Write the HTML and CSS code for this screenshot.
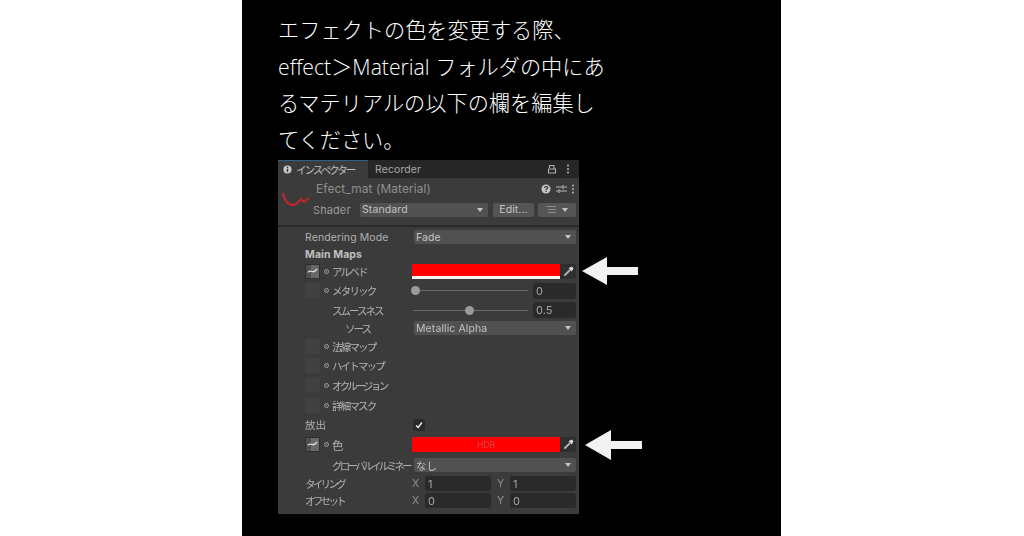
FILE: index.html
```html
<!DOCTYPE html>
<html lang="ja">
<head>
  <meta charset="UTF-8" />
  <title>エフェクトの色</title>
  <link rel="stylesheet" href="styles.css">
</head>
<body>
  <main class="page">
    <p class="intro">エフェクトの色を変更する際、<br>effect＞Material フォルダの中にあ<br>るマテリアルの以下の欄を編集し<br>てください。</p>

    <div class="inspector">
      <div class="tabs">
        <div class="tab active">
          <svg class="tab-icon" viewBox="0 0 10 10"><circle cx="5" cy="5" r="4.5" fill="#c8c8c8"/><rect x="4.2" y="4.2" width="1.6" height="3.6" fill="#333"/><rect x="4.2" y="2" width="1.6" height="1.5" fill="#333"/></svg>
          <span class="jp">インスペクター</span>
        </div>
        <div class="tab">Recorder</div>
        <div class="tab-tools">
          <svg class="lock" viewBox="0 0 10 10"><path d="M2.5 4V1.500h4.500v3M1.500 5h7v4h-7z" fill="none" stroke="#b0b0b0" stroke-width="1.100"/></svg>
          <span class="dots"></span>
        </div>
      </div>

      <div class="mat-head">
        <svg class="mat-preview" viewBox="0 0 30 18"><path d="M2 2c1 7 5 12 10 12 4 0 6-4 8-6l3 3 5-4" fill="none" stroke="#c4262b" stroke-width="2"/></svg>
        <div class="mat-info">
          <div class="mat-title">
            <span class="mat-name">Efect_mat (Material)</span>
            <svg class="help" viewBox="0 0 10 10"><circle cx="5" cy="5" r="4.500" fill="#c4c4c4"/><path d="M3.500 4c0-2 3.200-2 3.200-.2 0 1-1.700 1-1.700 2.200M5 6.800v1.200" fill="none" stroke="#333" stroke-width="1.200"/></svg>
            <svg class="presets" viewBox="0 0 11 10"><path d="M0 3h6M8 3h3M0 7h2M4 7h7M7 1v4M3 5v4" fill="none" stroke="#b8b8b8" stroke-width="1.200"/></svg>
            <span class="dots"></span>
          </div>
          <div class="shader-row">
            <span class="shader-label">Shader</span>
            <div class="dropdown shader">Standard</div>
            <div class="button edit">Edit...</div>
            <div class="button list">
              <svg class="list-icon" viewBox="0 0 10 7"><path d="M0 .5h10M2 3.500h8M2 6.500h8" stroke="#8c8c8c" fill="none"/></svg>
              <span class="caret"></span>
            </div>
          </div>
        </div>
      </div>

      <div class="props">
        <div class="row r17">
          <span class="label">Rendering Mode</span>
          <div class="dropdown wide">Fade</div>
        </div>
        <div class="row r17"><span class="label bold">Main Maps</span></div>

        <div class="row r18">
          <div class="slot filled"><svg viewBox="0 0 13 13"><path d="M1 7.500c2-2 3-2 5-1s3 0 6-3" fill="none" stroke="#ddd" stroke-width="1.500"/></svg></div>
          <span class="target"></span><span class="map-label">アルベド</span>
          <div class="swatch albedo"></div>
          <div class="picker"><svg viewBox="0 0 12 12"><path d="M1.500 10.500l6-6" stroke="#b8b8b8" stroke-width="2.200"/><path d="M6 2.500l3.500-2 2 2-2 3.500z" fill="#dcdcdc"/></svg></div>
          <svg class="arrow arrow-albedo" viewBox="0 0 56 28"><path d="M0 14L25 0v10h31v8H25v10z" fill="#f2f2f2"/></svg>
        </div>

        <div class="row r20">
          <div class="slot"></div>
          <span class="target"></span><span class="map-label">メタリック</span>
          <div class="slider"><span class="knob at-start"></span></div>
          <div class="number">0</div>
        </div>
        <div class="row r19">
          <span class="label sub jp">スムースネス</span>
          <div class="slider"><span class="knob at-mid"></span></div>
          <div class="number">0.5</div>
        </div>
        <div class="row r17">
          <span class="label sub2 jp">ソース</span>
          <div class="dropdown wide">Metallic Alpha</div>
        </div>

        <div class="row r19"><div class="slot"></div><span class="target"></span><span class="map-label">法線マップ</span></div>
        <div class="row r20"><div class="slot"></div><span class="target"></span><span class="map-label">ハイトマップ</span></div>
        <div class="row r20"><div class="slot"></div><span class="target"></span><span class="map-label squeezed">オクルージョン</span></div>
        <div class="row r19"><div class="slot"></div><span class="target"></span><span class="map-label">詳細マスク</span></div>

        <div class="row r20">
          <span class="label">放出</span>
          <div class="check"><svg viewBox="0 0 12 12"><path d="M2.500 6.500l2.500 2.500 4.500-6" fill="none" stroke="#f0f0f0" stroke-width="1.700"/></svg></div>
        </div>
        <div class="row r20">
          <div class="slot filled"><svg viewBox="0 0 13 13"><path d="M1 7.500c2-2 3-2 5-1s3 0 6-3" fill="none" stroke="#ddd" stroke-width="1.500"/></svg></div>
          <span class="target"></span><span class="map-label big">色</span>
          <div class="swatch hdr">HDR</div>
          <div class="picker"><svg viewBox="0 0 12 12"><path d="M1.500 10.500l6-6" stroke="#b8b8b8" stroke-width="2.200"/><path d="M6 2.500l3.500-2 2 2-2 3.500z" fill="#dcdcdc"/></svg></div>
          <svg class="arrow arrow-hdr" viewBox="0 0 57 30"><path d="M0 15L26 0v11h31v8H26v11z" fill="#f2f2f2"/></svg>
        </div>
        <div class="row r21">
          <span class="label sub narrow">グローバルイルミネー</span>
          <div class="dropdown tight">なし</div>
        </div>
        <div class="row r16">
          <span class="label narrow">タイリング</span>
          <div class="xy">
            <span class="axis">X</span><div class="number pair">1</div>
            <span class="axis y">Y</span><div class="number pair">1</div>
          </div>
        </div>
        <div class="row r18">
          <span class="label narrow">オフセット</span>
          <div class="xy">
            <span class="axis">X</span><div class="number pair">0</div>
            <span class="axis y">Y</span><div class="number pair">0</div>
          </div>
        </div>
      </div>
    </div>
  </main>
</body>
</html>
```

FILE: styles.css
```css
body {
  margin: 0;
  background-color: #ffffff;
}

.page {
  width: 539px;
  height: 536px;
  margin-left: 242px;
  padding: 12px 0 0 36px;
  box-sizing: border-box;
  background-color: #000000;
  overflow: hidden;
}

.intro {
  margin: 0 0 1px;
  color: #ffffff;
  font-family: "Open Sans", "Noto Sans CJK JP", sans-serif;
  font-size: 21.2px;
  font-weight: 300;
  line-height: 36.67px;
  white-space: nowrap;
}

/* inspector panel */
.inspector {
  width: 301px;
  height: 354px;
  background-color: #3b3b3b;
  color: #b4b4b4;
  font-family: "Inter", "Noto Sans CJK JP", sans-serif;
  font-size: 10.5px;
  letter-spacing: 0.1px;
  filter: blur(0.5px);
}

.jp {
  font-size: 10.5px;
  letter-spacing: -2px;
  white-space: nowrap;
}

.tabs {
  display: flex;
  height: 18px;
  background-color: #262626;
}

.tab {
  display: flex;
  align-items: center;
  padding: 1px 7px 0;
  color: #a6a6a6;
}

.tab.active {
  gap: 4px;
  width: 90px;
  padding: 0 0 0 5px;
  box-sizing: border-box;
  background-color: #3b3b3b;
  border-top: 1px solid #2f5f87;
  color: #bdbdbd;
}

.tab-icon {
  width: 9px;
  height: 9px;
}

.tab-tools {
  display: flex;
  align-items: center;
  gap: 10px;
  margin-left: auto;
  padding-right: 10px;
}

.lock {
  width: 10px;
  height: 10px;
}

.dots {
  width: 2px;
  height: 2px;
  border-radius: 50%;
  background-color: #b8b8b8;
  box-shadow: 0 -3.500px 0 #b8b8b8, 0 3.500px 0 #b8b8b8;
}

.mat-head {
  display: flex;
  height: 47px;
  border-bottom: 2px solid #2a2a2a;
}

.mat-preview {
  flex: none;
  width: 30px;
  height: 18px;
  margin: 13px 0 0 3px;
}

.mat-info {
  flex: 1;
  padding-top: 3px;
  margin-left: 2px;
}

.mat-title {
  display: flex;
  align-items: center;
  gap: 5px;
  height: 16px;
  padding-right: 5px;
  margin-left: 3px;
}

.mat-name {
  margin-right: auto;
  color: #8f8f8f;
  font-size: 11.900px;
}

.help {
  width: 10px;
  height: 10px;
}

.presets {
  width: 11px;
  height: 10px;
}

.shader-row {
  display: flex;
  align-items: center;
  height: 14px;
  margin: 6px 0 0;
}

.shader-label {
  width: 47px;
  color: #999999;
  font-size: 11px;
}

/* controls */
.dropdown {
  position: relative;
  display: flex;
  align-items: center;
  height: 14px;
  padding-left: 2px;
  box-sizing: border-box;
  border-radius: 2px;
  background-color: #515151;
  color: #c2c2c2;
}

.dropdown::after {
  content: "";
  position: absolute;
  top: 5px;
  right: 5px;
  border: 3.500px solid transparent;
  border-top: 4px solid #c4c4c4;
  border-bottom: 0;
}

.shader {
  width: 128px;
}

.wide {
  width: 162px;
  margin-left: 2px;
}

.tight {
  width: 162px;
  margin-left: auto;
}

.button {
  display: flex;
  align-items: center;
  justify-content: center;
  height: 14px;
  border-radius: 2px;
  background-color: #555555;
  color: #c4c4c4;
}

.edit {
  width: 41px;
  margin-left: 5px;
}

.list {
  gap: 6px;
  width: 38px;
  margin-left: 4px;
}

.list-icon {
  width: 10px;
  height: 7px;
}

.caret {
  border: 3.500px solid transparent;
  border-top: 4px solid #c4c4c4;
  border-bottom: 0;
}

.props {
  padding-top: 2px;
}

.row {
  position: relative;
  display: flex;
  align-items: center;
  padding: 0 3px 0 27px;
}

.r16 { height: 16px; }
.r17 { height: 17px; }
.r18 { height: 18px; }
.r19 { height: 19px; }
.r20 { height: 20px; }
.r21 { height: 21px; }

.label {
  flex: none;
  width: 107px;
  color: #b0b0b0;
}

.bold {
  font-weight: 700;
  color: #c0c0c0;
}

.sub {
  width: 80px;
  margin-left: 27px;
}

.sub2 {
  width: 67px;
  margin-left: 40px;
}

.narrow {
  font-size: 10.5px;
  letter-spacing: -2.700px;
  white-space: nowrap;
}

.slot {
  flex: none;
  display: flex;
  align-items: center;
  justify-content: center;
  width: 15px;
  height: 15px;
  background-color: #414141;
}

.slot.filled {
  background: linear-gradient(90deg, #4e4e4e 40%, #686868 40%);
  border: 1px solid #2e2e2e;
  box-sizing: border-box;
}

.slot svg {
  width: 11px;
  height: 11px;
}

.target {
  flex: none;
  width: 3px;
  height: 3px;
  margin-left: 4px;
  border: 1px solid #a0a0a0;
  border-radius: 50%;
  background: radial-gradient(circle, #a0a0a0 0.5px, transparent 1px);
}

.map-label {
  width: 83px;
  margin-left: 3px;
  font-size: 10.5px;
  letter-spacing: -1.800px;
  white-space: nowrap;
}

.squeezed {
  letter-spacing: -2.600px;
}

.big {
  font-size: 11.5px;
}

.swatch {
  flex: none;
  display: flex;
  align-items: center;
  justify-content: center;
  width: 148px;
  height: 15px;
  box-sizing: border-box;
  background-color: #fe0000;
  color: #d84444;
  font-size: 8.500px;
}

.albedo {
  border-bottom: 3px solid #f4f4f4;
}

.picker {
  flex: none;
  display: flex;
  align-items: center;
  justify-content: center;
  width: 16px;
  height: 15px;
  background-color: #2f2f2f;
}

.picker svg {
  width: 11px;
  height: 11px;
}

.slider {
  position: relative;
  flex: none;
  width: 115px;
  height: 1px;
  margin: 0 5px 0 1px;
  background-color: #6a6a6a;
}

.knob {
  position: absolute;
  top: -4px;
  width: 9px;
  height: 9px;
  border-radius: 50%;
  background-color: #9a9a9a;
}

.at-start { left: -2px; }
.at-mid { left: 52px; }

.number {
  flex: none;
  display: flex;
  align-items: center;
  width: 43px;
  height: 16px;
  padding-left: 3px;
  box-sizing: border-box;
  border-radius: 3px;
  background-color: #2a2a2a;
  color: #a4a4a4;
  font-size: 11px;
}

.check {
  display: flex;
  align-items: center;
  justify-content: center;
  width: 12px;
  height: 12px;
  margin-left: 1px;
  border-radius: 2px;
  background-color: #2a2a2a;
}

.check svg {
  width: 10px;
  height: 10px;
}

.xy {
  display: flex;
  align-items: center;
}

.axis {
  width: 13px;
  color: #909090;
}

.axis.y {
  margin-left: 6px;
}

.number.pair {
  width: 66px;
  height: 15px;
}

/* callout arrows over the panel edge */
.arrow {
  position: absolute;
}

.arrow-albedo {
  top: -6px;
  left: 304px;
  width: 56px;
  height: 28px;
}

.arrow-hdr {
  top: -5px;
  left: 307px;
  width: 57px;
  height: 30px;
}
```
